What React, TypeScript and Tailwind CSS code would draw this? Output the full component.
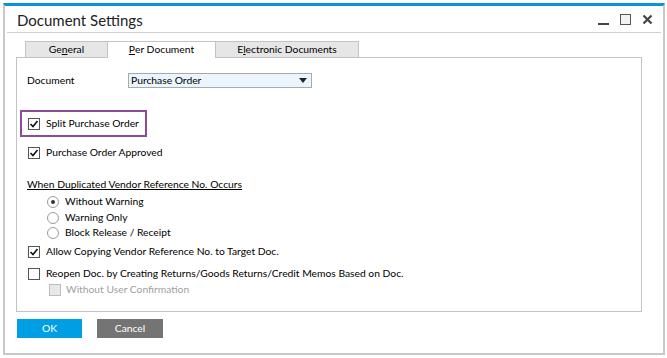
import React from "react";

const font = { fontFamily: 'Lato, "Noto Sans", sans-serif' };

function Check({ checked, disabled }: { checked?: boolean; disabled?: boolean }) {
  return (
    <div
      className={
        "w-[12px] h-[12px] border flex items-center justify-center shrink-0 " +
        (disabled ? "border-[#bdbdbd] bg-[#e8e8e8]" : "border-[#555] bg-white")
      }
    >
      {checked && (
        <svg width="10" height="10" viewBox="0 0 10 10">
          <path d="M1.5 5 L4 7.5 L8.5 2" fill="none" stroke="#111" strokeWidth="1.6" />
        </svg>
      )}
    </div>
  );
}

function Radio({ checked }: { checked?: boolean }) {
  return (
    <div className="w-[12px] h-[12px] rounded-full border border-[#9a9a9a] bg-white flex items-center justify-center shrink-0">
      {checked && <div className="w-[4px] h-[4px] rounded-full bg-[#333]" />}
    </div>
  );
}

export default function App() {
  return (
    <div className="w-[667px] h-[358px] bg-white pt-[3px] pl-[3px] text-[10.3px] text-black whitespace-nowrap" style={font}>
      <div className="w-[662px] h-[352px] border-t-[3px] border-t-[#0a93dc] border-x-2 border-b-2 border-x-[#c8c8c8] border-b-[#c8c8c8] flex flex-col">
        {/* title bar */}
        <div className="h-[26px] flex items-center pl-[12px] pr-[8px]">
          <div className="text-[15px] text-[#222] leading-none mt-[2px]">Document Settings</div>
          <div className="ml-auto flex items-center gap-[11px] pr-[2px]">
            <div className="w-[11px] h-[2px] bg-[#444] mt-[9px]" />
            <div className="w-[11px] h-[11px] border-[1.5px] border-[#555] bg-[#f2f2f2]" />
            <svg width="11" height="11" viewBox="0 0 11 11">
              <path d="M1.5 1.5 L9.5 9.5 M9.5 1.5 L1.5 9.5" stroke="#444" strokeWidth="2.2" />
            </svg>
          </div>
        </div>
        <div className="mx-[2px] h-px bg-[#cfcfcf]" />

        {/* tabs */}
        <div className="mt-[8px] pl-[11px] flex flex-col">
          <div className="flex h-[16px] pl-[9px]">
            <div className="w-[83px] h-[16px] border border-b-0 border-[#c3c3c3] bg-[#e6e6e6] flex items-center justify-center leading-none">
              Ge<span className="underline">n</span>eral
            </div>
            <div className="w-[107px] h-[17px] border-t border-[#c3c3c3] bg-white flex items-center justify-center leading-none relative z-10 pb-[1px]">
              <span className="underline">P</span>er Document
            </div>
            <div className="w-[144px] h-[16px] border border-b-0 border-[#c3c3c3] bg-[#e6e6e6] flex items-center justify-center leading-none">
              E<span className="underline">l</span>ectronic Documents
            </div>
          </div>

          {/* panel */}
          <div className="w-[626px] h-[255px] border border-[#c3c3c3] bg-white flex flex-col pl-[10px] pt-[15px]">
            <div className="flex items-center h-[15px]">
              <div className="w-[101px]">Document</div>
              <div className="w-[184px] h-[15px] border border-[#a9a9a9] bg-[#eaf5fd] flex items-center pl-[2px] pr-[4px]">
                <span className="leading-none">Purchase Order</span>
                <svg className="ml-auto" width="8" height="5" viewBox="0 0 8 5">
                  <path d="M0 0 H8 L4 5 Z" fill="#222" />
                </svg>
              </div>
            </div>

            <div className="mt-[22px] -ml-[7px] w-[127px] h-[27px] border-2 border-[#8d4a9a] flex items-center pl-[6px] gap-[6px]">
              <Check checked />
              <span>Split Purchase Order</span>
            </div>

            <div className="mt-[8px] h-[16px] flex items-center pl-[1px] gap-[6px]">
              <Check checked />
              <span>Purchase Order Approved</span>
            </div>

            <div className="mt-[16px] h-[16px] flex items-center">
              <span className="underline">When Duplicated Vendor Reference No. Occurs</span>
            </div>

            <div className="mt-[1px] pl-[20px] flex flex-col">
              <div className="h-[16px] flex items-center gap-[6px]">
                <Radio checked />
                <span>Without Warning</span>
              </div>
              <div className="h-[15px] flex items-center gap-[6px]">
                <Radio />
                <span>Warning Only</span>
              </div>
              <div className="h-[16px] flex items-center gap-[6px]">
                <Radio />
                <span>Block Release / Receipt</span>
              </div>
            </div>

            <div className="mt-[3px] h-[16px] flex items-center pl-[1px] gap-[6px]">
              <Check checked />
              <span>Allow Copying Vendor Reference No. to Target Doc.</span>
            </div>

            <div className="mt-[6px] h-[16px] flex items-center pl-[1px] gap-[6px]">
              <Check />
              <span>Reopen Doc. by Creating Returns/Goods Returns/Credit Memos Based on Doc.</span>
            </div>

            <div className="h-[16px] flex items-center pl-[22px] gap-[5px]">
              <Check disabled />
              <span className="text-[#a0a0a0]">Without User Confirmation</span>
            </div>
          </div>
        </div>

        {/* buttons */}
        <div className="mt-[7px] pl-[12px] flex gap-[15px]">
          <div className="w-[65px] h-[19px] bg-[#009ee2] text-white flex items-center justify-center">OK</div>
          <div className="w-[66px] h-[19px] bg-[#747474] text-white flex items-center justify-center">Cancel</div>
        </div>
      </div>
    </div>
  );
}
